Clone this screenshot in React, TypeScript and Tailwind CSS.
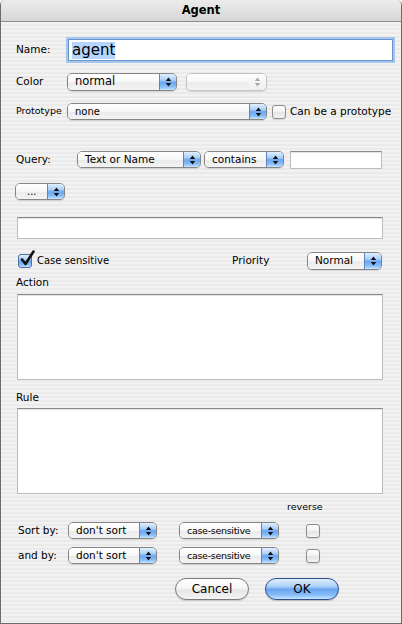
import React from "react";

const BLUE =
  "bg-[linear-gradient(180deg,#e2effe_0%,#a9cff8_38%,#6aa6f0_52%,#86bdf8_80%,#c9e5ff_100%)]";

function Arrows({ color = "#111" }: { color?: string }) {
  return (
    <svg width="7" height="10" viewBox="0 0 7 10">
      <polygon points="3.5,0.5 6.2,4 0.8,4" fill={color} />
      <polygon points="0.8,6 6.2,6 3.5,9.5" fill={color} />
    </svg>
  );
}

function Popup({
  label,
  className,
  textClass = "text-[10.5px]",
  disabled,
}: {
  label?: string;
  className: string;
  textClass?: string;
  disabled?: boolean;
}) {
  return (
    <div
      className={`flex h-[17px] shrink-0 overflow-hidden rounded-[5px] border shadow-[0_1px_1px_rgba(0,0,0,0.12)] ${
        disabled ? "border-[#c2c2c2]" : "border-[#858585]"
      } ${className}`}
    >
      <div className="flex flex-1 items-center overflow-hidden whitespace-nowrap bg-[linear-gradient(180deg,#ffffff_0%,#f7f7f7_50%,#ebebeb_55%,#f4f4f4_100%)] pl-[7px] leading-none text-black">
        <span className={textClass}>{label}</span>
      </div>
      {disabled ? (
        <div className="flex w-[17px] items-center justify-center bg-[linear-gradient(180deg,#fdfdfd,#efefef)]">
          <Arrows color="#a8a8a8" />
        </div>
      ) : (
        <div className={`flex w-[17px] items-center justify-center border-l border-[#5f84bd] ${BLUE}`}>
          <Arrows />
        </div>
      )}
    </div>
  );
}

function Check({ checked }: { checked?: boolean }) {
  return (
    <div
      className={`relative h-[14px] w-[14px] shrink-0 rounded-[3px] border ${
        checked
          ? `border-[#4b6ea5] ${BLUE}`
          : "border-[#8d8d8d] bg-[linear-gradient(180deg,#ffffff,#f1f1f1_50%,#e4e4e4_55%,#f3f3f3)] shadow-[0_1px_1px_rgba(0,0,0,0.12)]"
      }`}
    >
      {checked && (
        <svg className="absolute left-[1px] top-[-5px]" width="15" height="17" viewBox="0 0 15 17">
          <path d="M2 9.5 L5.5 14 L13.5 1.5" fill="none" stroke="#111" strokeWidth="2.6" strokeLinecap="round" strokeLinejoin="round" />
        </svg>
      )}
    </div>
  );
}

function Field({ className }: { className: string }) {
  return (
    <div
      className={`shrink-0 border border-[#bdbdbd] border-t-[#8a8a8a] bg-white shadow-[inset_0_1px_1px_rgba(0,0,0,0.12)] ${className}`}
    />
  );
}

export default function App() {
  return (
    <div className="h-[624px] w-[402px] font-['DejaVu_Sans',sans-serif] text-black">
      <div className="flex h-[624px] w-[402px] flex-col overflow-hidden rounded-t-[5px] border-x border-b border-[#6c6c6c]">
        {/* Title bar */}
        <div className="flex h-[22px] shrink-0 items-center justify-center border-b border-[#8e8e8e] bg-[linear-gradient(180deg,#ececec,#d6d6d6)]">
          <span className="text-[11.5px] font-bold">Agent</span>
        </div>

        {/* Body */}
        <div className="flex flex-1 flex-col bg-[repeating-linear-gradient(180deg,#f2f2f2_0px,#f2f2f2_2px,#eaeaea_2px,#eaeaea_4px)] pl-[15px]">
          {/* Name */}
          <div className="mt-[16px] flex h-[24px] items-center">
            <span className="w-[52px] text-[10.5px]">Name:</span>
            <div className="flex h-[22px] w-[325px] items-center border border-[#6b93cc] bg-white pl-[3px] shadow-[0_0_0_2px_#a6c5ec]">
              <span className="bg-[#b5d5ff] text-[15px] leading-[17px]">agent</span>
            </div>
          </div>

          {/* Color */}
          <div className="mt-[11px] flex h-[18px] items-center">
            <span className="w-[51px] text-[10.5px]">Color</span>
            <Popup label="normal" className="h-[18px] w-[110px]" textClass="text-[11.5px]" />
            <Popup disabled className="ml-[9px] h-[18px] w-[81px]" />
          </div>

          {/* Prototype */}
          <div className="mt-[12px] flex h-[17px] items-center">
            <span className="w-[51px] text-[9.5px]">Prototype</span>
            <Popup label="none" className="w-[200px]" textClass="text-[10px]" />
            <div className="ml-[5px]">
              <Check />
            </div>
            <span className="ml-[4px] whitespace-nowrap text-[10.5px]">Can be a prototype</span>
          </div>

          {/* Query */}
          <div className="mt-[31px] flex h-[17px] items-center">
            <span className="w-[61px] text-[10.5px]">Query:</span>
            <Popup label="Text or Name" className="w-[124px]" />
            <Popup label="contains" className="ml-[3px] w-[80px]" />
            <Field className="ml-[6px] h-[18px] w-[92px]" />
          </div>

          <div className="mt-[15px] flex h-[17px] items-center">
            <Popup label="..." className="ml-[-1px] w-[50px]" textClass="text-[10px] pl-[4px]" />
          </div>

          <div className="mt-[17px] flex">
            <Field className="ml-[1px] h-[22px] w-[366px]" />
          </div>

          {/* Case sensitive / Priority */}
          <div className="mt-[13px] flex h-[17px] items-center">
            <div className="flex w-[216px] items-center">
              <div className="ml-[2px]">
                <Check checked />
              </div>
              <span className="ml-[5px] text-[10px]">Case sensitive</span>
            </div>
            <span className="w-[75px] text-[10.5px]">Priority</span>
            <Popup label="Normal" className="h-[18px] w-[75px]" />
          </div>

          <div className="mt-[7px] h-[13px] text-[10.5px] leading-[13px]">Action</div>
          <div className="mt-[5px] flex">
            <Field className="ml-[1px] h-[86px] w-[366px]" />
          </div>

          <div className="mt-[11px] h-[13px] text-[10.5px] leading-[13px]">Rule</div>
          <div className="mt-[4px] flex">
            <Field className="ml-[1px] h-[86px] w-[366px]" />
          </div>

          {/* Sorting */}
          <div className="mt-[7px] h-[12px] pl-[271px] text-[9.5px] leading-[12px]">reverse</div>
          <div className="mt-[9px] flex h-[17px] items-center">
            <span className="ml-[2px] w-[50px] text-[10.5px]">Sort by:</span>
            <Popup label="don't sort" className="w-[89px]" />
            <Popup label="case-sensitive" className="ml-[22px] w-[100px]" textClass="text-[9.5px] tracking-[-0.3px]" />
            <div className="ml-[27px]">
              <Check />
            </div>
          </div>
          <div className="mt-[8px] flex h-[17px] items-center">
            <span className="ml-[2px] w-[50px] text-[10.5px]">and by:</span>
            <Popup label="don't sort" className="w-[89px]" />
            <Popup label="case-sensitive" className="ml-[22px] w-[100px]" textClass="text-[9.5px] tracking-[-0.3px]" />
            <div className="ml-[27px]">
              <Check />
            </div>
          </div>

          {/* Buttons */}
          <div className="mt-[14px] flex h-[22px] items-center">
            <button className="ml-[159px] flex h-[22px] w-[74px] items-center justify-center rounded-full border border-[#7a7a7a] bg-[linear-gradient(180deg,#ffffff_0%,#f6f6f6_45%,#e6e6e6_55%,#f5f5f5_100%)] text-[12px] shadow-[0_1px_1px_rgba(0,0,0,0.15)]">
              Cancel
            </button>
            <button
              className={`ml-[16px] flex h-[22px] w-[74px] items-center justify-center rounded-full border border-[#2d4f8c] text-[12px] shadow-[0_1px_1px_rgba(0,0,0,0.2)] ${BLUE}`}
            >
              OK
            </button>
          </div>
        </div>
      </div>
    </div>
  );
}
